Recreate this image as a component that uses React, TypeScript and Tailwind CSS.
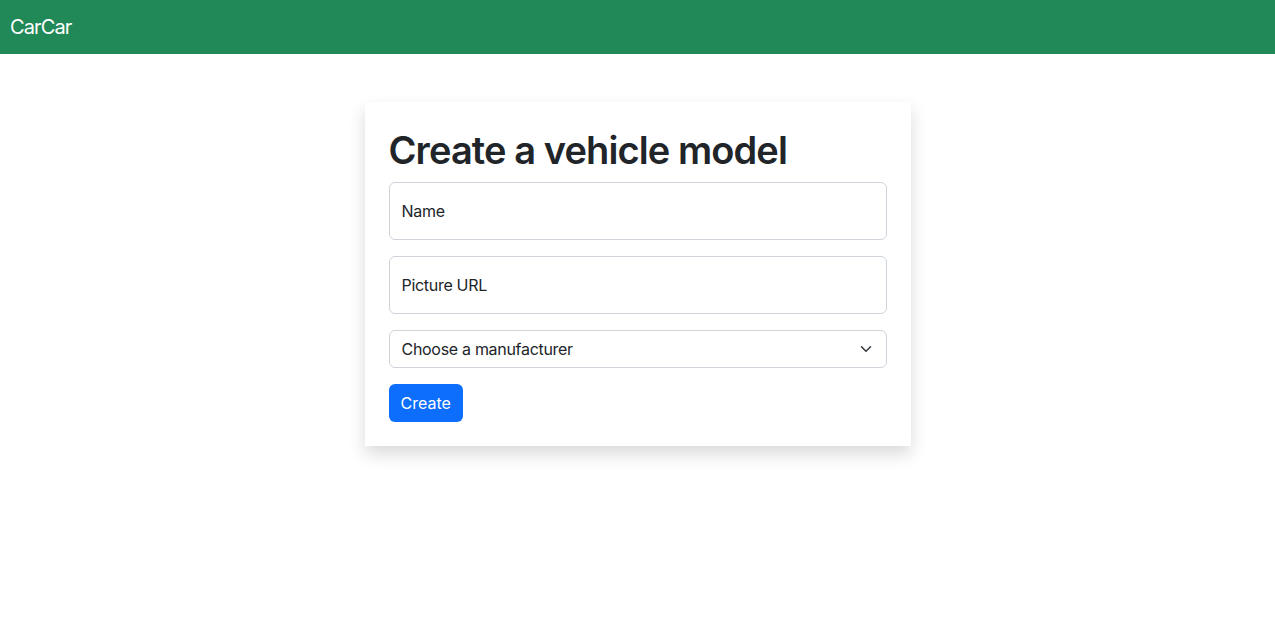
import React from "react";

export default function App() {
  return (
    <div className="min-h-[625px] bg-white text-[#212529]" style={{ fontFamily: "Inter, 'Noto Sans', sans-serif" }}>
      <nav className="h-[54px] bg-[#218857] flex items-center px-[10px]">
        <span className="text-white text-[20px] leading-[30px] tracking-[-0.9px]">CarCar</span>
      </nav>
      <div className="flex justify-center pt-[48px]">
        <div className="w-[546px] bg-white p-6 shadow-[0_8px_16px_rgba(0,0,0,0.15)]">
          <h1 className="text-[38px] leading-[48px] font-semibold mb-2 tracking-[-0.9px]">Create a vehicle model</h1>
          <form className="flex flex-col">
            <div className="mb-4">
              <input
                placeholder="Name"
                className="w-full h-[58px] border border-[#ced4da] rounded-[6px] px-3 text-[16px] tracking-[-0.3px] placeholder:text-[#212529] outline-none"
              />
            </div>
            <div className="mb-4">
              <input
                placeholder="Picture URL"
                className="w-full h-[58px] border border-[#ced4da] rounded-[6px] px-3 text-[16px] tracking-[-0.3px] placeholder:text-[#212529] outline-none"
              />
            </div>
            <div className="mb-4 relative">
              <select className="appearance-none w-full h-[38px] border border-[#ced4da] rounded-[6px] pl-3 pr-9 text-[16px] tracking-[-0.3px] bg-white text-[#212529] outline-none">
                <option>Choose a manufacturer</option>
              </select>
              <svg
                className="absolute right-[15px] top-[13px] pointer-events-none"
                width="12"
                height="12"
                viewBox="0 0 16 16"
              >
                <path d="M2 5l6 6 6-6" fill="none" stroke="#343a40" strokeWidth="2" strokeLinecap="round" strokeLinejoin="round" />
              </svg>
            </div>
            <div>
              <button
                type="button"
                className="bg-[#0d6efd] text-white text-[16px] leading-[24px] px-3 py-[7px] rounded-[6px]"
              >
                Create
              </button>
            </div>
          </form>
        </div>
      </div>
    </div>
  );
}
